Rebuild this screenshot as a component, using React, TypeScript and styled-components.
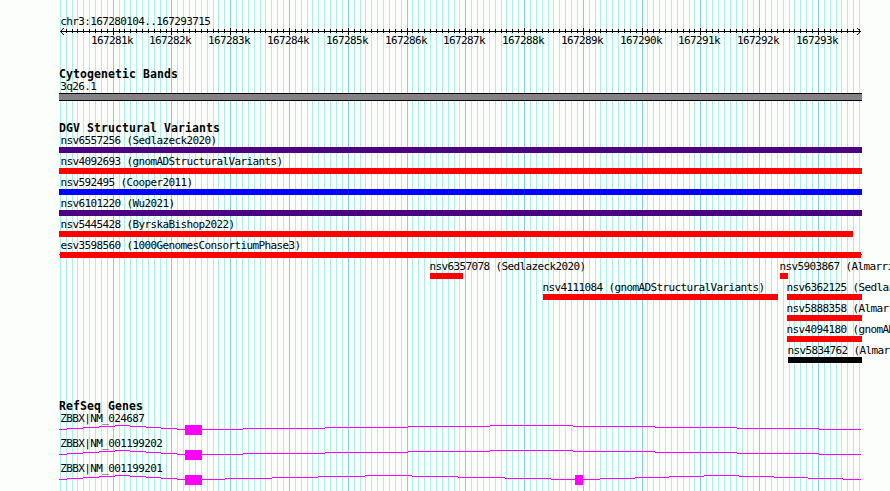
import styled, { createGlobalStyle } from "styled-components";

const WIDTH = 890;
const HEIGHT = 491;
const REGION = { chr: "chr3", start: 167280104, end: 167293715 };
const LEFT = 60;
const SCALE = 800 / (REGION.end - REGION.start + 1);

const toX = (bp: number) => Math.round(LEFT + (bp - REGION.start) * SCALE);

const TICKS = Array.from({ length: 137 }, (_, i) => 167280100 + i * 100).map(
  (bp) => ({ bp, x: toX(bp), major: bp % 1000 === 0 })
);
const MAJOR_TICKS = TICKS.filter((tick) => tick.major);

const RED = "#ff0000";
const BLUE = "#0000ff";
const INDIGO = "#4b0082";
const BLACK = "#000000";
const MAGENTA = "#ff00ff";

interface Variant {
  name: string;
  start: number;
  end: number;
  color: string;
  labelX: number;
  whiskers?: boolean;
}

const LANES: Variant[][] = [
  [{ name: "nsv6557256 (Sedlazeck2020)", start: 59, end: 862, color: INDIGO, labelX: 60.4 }],
  [{ name: "nsv4092693 (gnomADStructuralVariants)", start: 59, end: 862, color: RED, labelX: 60.4 }],
  [{ name: "nsv592495 (Cooper2011)", start: 59, end: 862, color: BLUE, labelX: 60.4 }],
  [{ name: "nsv6101220 (Wu2021)", start: 59, end: 862, color: INDIGO, labelX: 60.4 }],
  [{ name: "nsv5445428 (ByrskaBishop2022)", start: 59, end: 853, color: RED, labelX: 60.4 }],
  [
    {
      name: "esv3598560 (1000GenomesConsortiumPhase3)",
      start: 60,
      end: 861,
      color: RED,
      labelX: 60.4,
      whiskers: true,
    },
  ],
  [
    { name: "nsv6357078 (Sedlazeck2020)", start: 430, end: 463, color: RED, labelX: 429.4 },
    { name: "nsv5903867 (Almarri2020)", start: 780, end: 788, color: RED, labelX: 779.4 },
  ],
  [
    { name: "nsv4111084 (gnomADStructuralVariants)", start: 543, end: 778, color: RED, labelX: 542.4 },
    { name: "nsv6362125 (Sedlazeck2020)", start: 787, end: 862, color: RED, labelX: 786.4 },
  ],
  [{ name: "nsv5888358 (Almarri2020)", start: 787, end: 862, color: RED, labelX: 786.4 }],
  [{ name: "nsv4094180 (gnomADStructuralVariants)", start: 787, end: 862, color: RED, labelX: 786.4 }],
  [{ name: "nsv5834762 (Almarri2020)", start: 788, end: 862, color: BLACK, labelX: 787.4 }],
];

// Each intron is a stepped arc: x positions where the line moves one pixel.
const FIRST_INTRON = [59, 67, 83, 99, 115, 130, 146, 161, 177, 185];
const LONG_INTRON = [202, 243, 325, 408, 490, 573, 655, 737, 819, 861];
const LEVELS = [0, 1, 2, 3, 4, 3, 2, 1, 0];

const GENES = [
  {
    name: "ZBBX|NM_024687",
    exons: [[185, 202]],
    introns: [FIRST_INTRON, LONG_INTRON],
  },
  {
    name: "ZBBX|NM_001199202",
    exons: [[185, 202]],
    introns: [FIRST_INTRON, LONG_INTRON],
  },
  {
    name: "ZBBX|NM_001199201",
    exons: [
      [185, 202],
      [575, 583],
    ],
    introns: [
      FIRST_INTRON,
      [202, 225, 272, 318, 365, 412, 458, 505, 551, 575],
      [583, 600, 635, 669, 704, 739, 774, 808, 843, 861],
    ],
  },
];

const Grid = () => (
  <GridSvg width={WIDTH} height={HEIGHT}>
    {TICKS.map(({ bp, x, major }) => (
      <rect
        key={bp}
        x={x}
        y={0}
        width={1}
        height={HEIGHT}
        fill={major ? "#84ceec" : "#aceeec"}
      />
    ))}
  </GridSvg>
);

const Ruler = () => (
  <RulerSection>
    <RegionLabel>
      {REGION.chr}:{REGION.start}..{REGION.end}
    </RegionLabel>
    <Drawing width={WIDTH} height={9}>
      <rect x={60} y={4} width={801} height={1} />
      {TICKS.slice(1).map(({ bp, x, major }) => (
        <rect
          key={bp}
          x={x}
          y={major ? 1 : 2}
          width={1}
          height={major ? 7 : 4}
        />
      ))}
      <path
        d="M61 3h1v1h-1zM62 2h1v1h-1zM63 1h1v1h-1zM61 5h1v1h-1zM62 6h1v1h-1zM63 7h1v1h-1z
           M859 3h1v1h-1zM858 2h1v1h-1zM857 1h1v1h-1zM859 5h1v1h-1zM858 6h1v1h-1zM857 7h1v1h-1z"
      />
    </Drawing>
    <TickLabels>
      {MAJOR_TICKS.map(({ bp, x }, i) => (
        <TickLabel
          key={bp}
          style={{ marginLeft: x - 22 - (i ? MAJOR_TICKS[i - 1].x + 20 : 0) }}
        >
          {bp / 1000}k
        </TickLabel>
      ))}
    </TickLabels>
  </RulerSection>
);

const Lane = ({ variants }: { variants: Variant[] }) => (
  <LaneRow>
    {variants.map((v, i) => (
      <Feature
        key={v.name}
        style={{
          marginLeft: v.start - (i ? variants[i - 1].end : 0),
          width: v.end - v.start,
        }}
      >
        <FeatureLabel style={{ marginLeft: v.labelX - v.start }}>
          {v.name}
        </FeatureLabel>
        <Bar $color={v.color} $whiskers={v.whiskers} />
      </Feature>
    ))}
  </LaneRow>
);

const Gene = ({ name, exons, introns }: (typeof GENES)[number]) => (
  <GeneRow>
    <GeneLabel>{name}</GeneLabel>
    <Drawing width={WIDTH} height={10} fill={MAGENTA}>
      {introns.map((stops) =>
        LEVELS.map((level, i) => (
          <rect
            key={stops[i]}
            x={stops[i]}
            y={4 - level}
            width={stops[i + 1] - stops[i]}
            height={1}
          />
        ))
      )}
      {exons.map(([start, end]) => (
        <rect key={start} x={start} y={0} width={end - start} height={10} />
      ))}
    </Drawing>
  </GeneRow>
);

export default function App() {
  return (
    <Browser>
      <GlobalStyle />
      <Grid />
      <Ruler />
      <Track $height={54}>
        <TrackTitle>Cytogenetic Bands</TrackTitle>
        <BandLabel>3q26.1</BandLabel>
        <Band />
      </Track>
      <Track $height={278}>
        <TrackTitle>DGV Structural Variants</TrackTitle>
        {LANES.map((variants) => (
          <Lane key={variants[0].name} variants={variants} />
        ))}
      </Track>
      <Track $height={92}>
        <TrackTitle>RefSeq Genes</TrackTitle>
        {GENES.map((gene) => (
          <Gene key={gene.name} {...gene} />
        ))}
      </Track>
    </Browser>
  );
}

const GlobalStyle = createGlobalStyle`
  body {
    margin: 0;
    overflow: hidden;
    background-color: #fcfefc;
  }
`;

const Browser = styled.main`
  position: relative;
  width: ${WIDTH}px;
  height: ${HEIGHT}px;
  overflow: hidden;
  color: #000;
  font-family: "DejaVu Sans Mono", monospace;
  font-size: 11px;
  letter-spacing: -0.622px;
  white-space: nowrap;
`;

const GridSvg = styled.svg`
  position: absolute;
  inset: 0;
  z-index: -1;
  shape-rendering: crispEdges;
`;

const Drawing = styled.svg`
  display: block;
  shape-rendering: crispEdges;
`;

const RulerSection = styled.header`
  box-sizing: border-box;
  height: 67px;
  padding-top: 14px;
`;

const RegionLabel = styled.div`
  height: 13px;
  line-height: 15px;
  padding-left: 60.2px;
`;

const TickLabels = styled.div`
  display: flex;
  margin-top: -2px;
`;

const TickLabel = styled.span`
  flex: none;
  width: 42px;
  line-height: 13px;
`;

const Track = styled.section<{ $height: number }>`
  height: ${(props) => props.$height}px;
`;

const TrackTitle = styled.h2`
  margin: 0;
  padding-left: 59px;
  height: 11px;
  line-height: 14px;
  font-size: 11.5px;
  font-weight: bold;
  letter-spacing: 0.077px;
`;

const BandLabel = styled.div`
  height: 15px;
  line-height: 17px;
  padding-left: 60.2px;
`;

const Band = styled.div`
  box-sizing: border-box;
  width: 803px;
  height: 8px;
  margin-left: 59px;
  border: solid #000;
  border-width: 1px 0;
  background-color: #848284;
`;

const LaneRow = styled.div`
  display: flex;
  height: 21px;
`;

const Feature = styled.div`
  flex: none;
`;

const FeatureLabel = styled.div`
  height: 15px;
  line-height: 17px;
`;

const Bar = styled.div<{ $color: string; $whiskers?: boolean }>`
  height: 6px;
  background-color: ${(props) => props.$color};

  /* one pixel of the connector line shows past both ends */
  ${(props) =>
    props.$whiskers &&
    `
    background:
      linear-gradient(${props.$color}, ${props.$color}) 1px 0 / calc(100% - 2px) 6px no-repeat,
      linear-gradient(${props.$color}, ${props.$color}) 0 2px / 100% 1px no-repeat;
    margin: 0 -1px;
  `}
`;

const GeneRow = styled.div`
  height: 25px;
`;

const GeneLabel = styled.div`
  height: 15px;
  line-height: 18px;
  padding-left: 60.2px;
`;
